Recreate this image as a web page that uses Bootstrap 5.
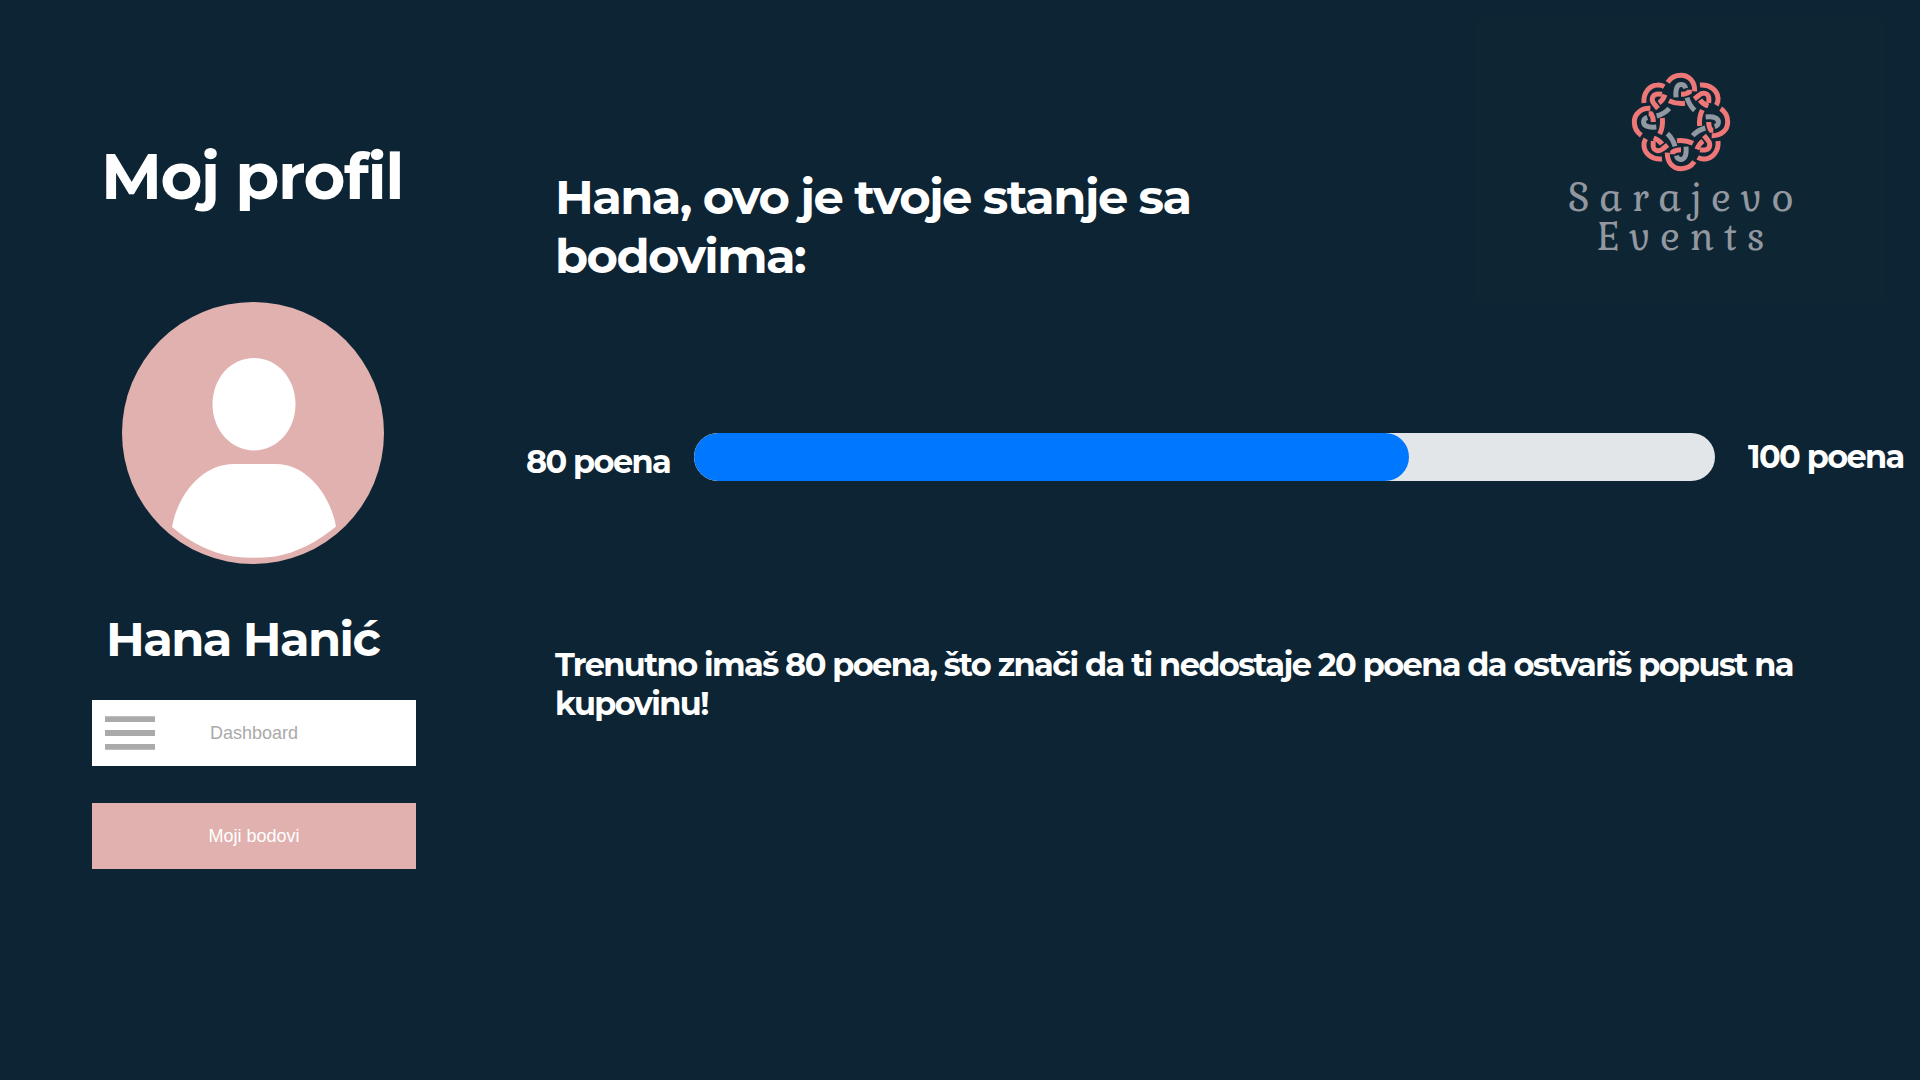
<!DOCTYPE html>
<html lang="bs">
<head>
<meta charset="utf-8">
<meta name="viewport" content="width=device-width, initial-scale=1">
<title>Moj profil – Sarajevo Events</title>
<link href="https://cdn.jsdelivr.net/npm/bootstrap@5.3.0/dist/css/bootstrap.min.css" rel="stylesheet">
<style>
  body { background: #0c2433; font-family: Montserrat, Inter, sans-serif; font-weight: 700; overflow: hidden; }
  .page { height: 1080px; }
  .profile-side { width: 508px; padding: 139px 92px 0; }
  .page-title { font-size: 64px; line-height: 74px; letter-spacing: -1.5px; font-weight: 700; margin: 0 -20px 89px 9px; }
  .avatar { width: 262px; height: 262px; margin-left: 30px; }
  .person-name { font-size: 48px; line-height: 56px; letter-spacing: -1.6px; font-weight: 700; margin: 47px 0 33px 14px; }
  .menu-stack { gap: 37px; }
  .menu-btn { height: 66px; padding-bottom: 1px; font: 18px/24px "Liberation Sans", Arial, sans-serif; }
  .menu-btn span { transform: scaleY(1.06); }
  .menu-btn.light-item { background: #fff; color: #aaa; }
  .menu-btn.pink-item { background: #e1b1af; color: #fff; }
  .burger { left: 13px; top: 16px; }
  .top-band { height: 433px; padding-left: 47px; padding-right: 35px; }
  .balance-title { width: 700px; font-size: 48px; line-height: 59px; font-weight: 700; letter-spacing: -1.58px; margin-top: 168px; }
  .brand-box { width: 410px; height: 285px; margin-top: 18px; padding-top: 44px; background: #0e2533; }
  .brand-text { font: 38px/39px Gabriela, "Liberation Serif", serif; letter-spacing: 9.7px; padding-left: 11px; margin-top: -1px; color: #9297a0; }
  .points-row { height: 48px; padding-left: 18px; font-size: 32px; line-height: 39px; letter-spacing: -1.6px; }
  .points-from { width: 168px; padding-top: 9px; }
  .points-to { margin-left: 33px; padding-bottom: 1px; }
  .points-track { width: 1021px; height: 48px; border-radius: 24px; background: #e2e6e9; }
  .points-track .progress-bar { background: #0077ff; border-radius: 24px; }
  .points-note { width: 1262px; margin: 164px 0 0 47px; font-size: 32px; line-height: 39px; letter-spacing: -1.59px; }
</style>
</head>
<body class="text-white">
<div class="page d-flex">
  <aside class="profile-side flex-shrink-0">
    <h1 class="page-title text-nowrap">Moj profil</h1>
    <svg class="avatar d-block" viewBox="0 0 262 262" aria-hidden="true">
      <circle cx="131" cy="131" r="131" fill="#e1b1af"/>
      <path fill="#fff" d="M132 56C155 56 173.500 76 173.500 102.500C173.500 129 154 148.500 132 148.500C110 148.500 90.500 129 90.500 102.500C90.500 76 109 56 132 56Z"/>
      <path fill="#fff" d="M112 162H154C184 162 208 192 214 224.500C197 239 174 251 153 254.500Q132 257 111 254.500C88 251 68 240 50 225C56 192 80 162 112 162Z"/>
    </svg>
    <h2 class="person-name text-nowrap">Hana Hanić</h2>
    <nav class="menu-stack d-flex flex-column">
      <a class="menu-btn light-item position-relative d-flex align-items-center justify-content-center text-decoration-none" href="#">
        <svg class="burger position-absolute" width="50" height="34" viewBox="0 0 50 34" fill="#aaa" aria-hidden="true">
          <path d="M0 .2H50V6H0ZM0 14.100H50V20H0ZM0 28H50V33.700H0Z"/>
        </svg>
        <span>Dashboard</span>
      </a>
      <a class="menu-btn pink-item d-flex align-items-center justify-content-center text-decoration-none" href="#"><span>Moji bodovi</span></a>
    </nav>
  </aside>

  <main class="flex-grow-1">
    <header class="top-band d-flex justify-content-between align-items-start">
      <h2 class="balance-title mb-0">Hana, ovo je tvoje stanje sa bodovima:</h2>
      <div class="brand-box d-flex flex-column align-items-center">
        <svg width="120" height="118" viewBox="0 0 360 354" fill="none" stroke-width="15" aria-hidden="true">
          <defs>
            <g id="knot">
              <path stroke="#ee7777" d="M-40 -119C-30 -134 -14 -140 0 -140C24 -140 42 -121 41 -92"/>
              <path stroke="#ee7777" d="M57 -111C88 -114 110 -94 111 -71C112 -62 110 -57 106 -50"/>
              <path stroke="#ee7777" d="M40 -69L55 -81C65 -90 80 -87 83 -75C84 -69 84 -64 83 -57"/>
              <path stroke="#ee7777" d="M57 -66C63 -57 71 -52 82 -48"/>
              <path stroke="#ee7777" d="M0 -83C10 -83 18 -85 25 -90V-97"/>
              <path stroke="#ee7777" d="M-36 -64C-20 -56 -6 -54 12 -56"/>
              <path stroke="#9198a1" d="M-15 -74C-16 -86 -16 -96 -12 -104C-6 -116 10 -115 14 -101"/>
              <path stroke="#9198a1" d="M18 -73C23 -56 30 -45 41 -35"/>
            </g>
          </defs>
          <g transform="translate(183 180)">
            <use href="#knot"/>
            <use href="#knot" transform="rotate(90)"/>
            <use href="#knot" transform="rotate(180)"/>
            <use href="#knot" transform="rotate(270)"/>
          </g>
        </svg>
        <div class="brand-text text-center">Sarajevo<br>Events</div>
      </div>
    </header>

    <section class="points-row d-flex align-items-center text-nowrap">
      <div class="points-from flex-shrink-0">80 poena</div>
      <div class="progress points-track flex-shrink-0" role="progressbar" aria-valuenow="80" aria-valuemin="0" aria-valuemax="100">
        <div class="progress-bar" style="width: 70%"></div>
      </div>
      <div class="points-to">100 poena</div>
    </section>

    <p class="points-note">Trenutno imaš 80 poena, što znači da ti nedostaje 20 poena da ostvariš popust na kupovinu!</p>
  </main>
</div>
<script src="https://cdn.jsdelivr.net/npm/bootstrap@5.3.0/dist/js/bootstrap.bundle.min.js"></script>
</body>
</html>
